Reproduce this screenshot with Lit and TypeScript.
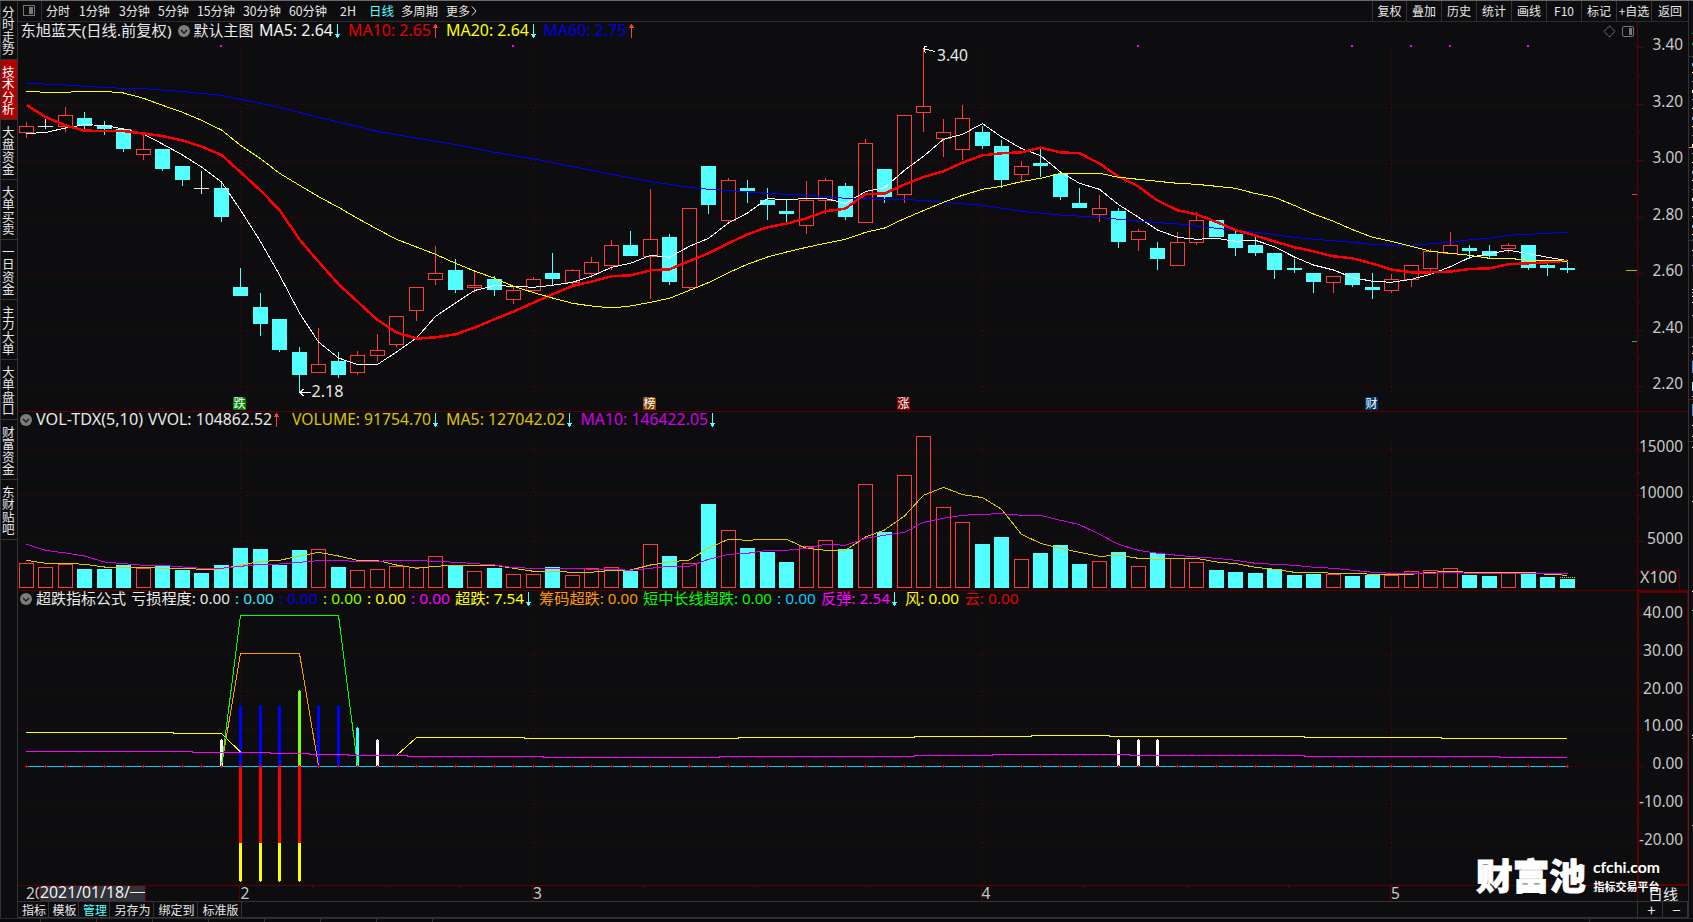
import { LitElement, html, svg, css } from "lit";
import { customElement } from "lit/decorators.js";

const UP = "#ff3c3c";
const DOWN = "#54ffff";
const GRID = "#5f0000";
const N = 80;

/** Left pixel column of the n-th trading day. */
const col = (i: number) => Math.floor(26 + 19.512 * i);

// kind, high, body top, body bottom, low
type Candle = [string, number, number, number, number];
const candles: Candle[] = [
  ["r", 122, 126, 132, 137], ["w", 119, 126, 126, 128], ["r", 107, 115, 126, 131], ["c", 112, 118, 125, 129],
  ["c", 121, 125, 128, 134], ["c", 129, 129, 148, 151], ["r", 135, 149, 154, 159], ["c", 149, 149, 168, 170],
  ["c", 166, 166, 179, 185], ["w", 171, 188, 188, 193], ["c", 183, 188, 216, 221], ["c", 268, 287, 295, 295],
  ["c", 293, 307, 323, 335], ["c", 319, 319, 349, 351], ["c", 347, 352, 374, 392], ["r", 328, 364, 372, 372],
  ["c", 352, 361, 374, 377], ["r", 351, 355, 372, 374], ["r", 334, 350, 355, 360], ["r", 316, 316, 344, 346],
  ["r", 287, 287, 310, 320], ["r", 246, 273, 279, 284], ["c", 259, 270, 289, 292], ["r", 271, 285, 287, 292],
  ["c", 276, 279, 289, 295], ["r", 286, 290, 299, 303], ["r", 277, 279, 290, 290], ["c", 253, 273, 278, 284],
  ["r", 269, 270, 282, 284], ["r", 257, 262, 273, 277], ["r", 240, 245, 265, 269], ["c", 231, 245, 255, 255],
  ["r", 189, 239, 256, 298], ["c", 234, 237, 281, 284], ["r", 208, 208, 287, 289], ["c", 166, 166, 204, 213],
  ["r", 178, 180, 220, 221], ["c", 180, 188, 190, 202], ["c", 188, 200, 204, 219], ["c", 199, 211, 213, 221],
  ["r", 181, 200, 225, 233], ["r", 178, 180, 200, 213], ["c", 183, 186, 216, 219], ["r", 139, 143, 222, 222],
  ["c", 169, 169, 196, 202], ["r", 115, 115, 194, 202], ["r", 48, 106, 112, 131], ["r", 119, 132, 138, 156],
  ["r", 105, 118, 149, 159], ["c", 126, 132, 145, 148], ["c", 140, 146, 179, 187], ["r", 161, 166, 174, 182],
  ["c", 147, 163, 165, 176], ["c", 171, 174, 196, 199], ["c", 188, 203, 207, 207], ["r", 195, 208, 214, 221],
  ["c", 208, 211, 241, 247], ["r", 229, 231, 239, 250], ["c", 242, 248, 258, 269], ["r", 232, 242, 265, 265],
  ["r", 212, 220, 242, 244], ["c", 220, 220, 236, 236], ["c", 230, 234, 247, 255], ["c", 237, 245, 252, 255],
  ["c", 253, 253, 269, 278], ["c", 259, 268, 269, 272], ["c", 273, 273, 281, 292], ["r", 276, 276, 282, 292],
  ["c", 273, 273, 284, 286], ["c", 273, 287, 289, 298], ["r", 274, 279, 290, 292], ["r", 265, 265, 279, 286],
  ["r", 249, 251, 268, 270], ["r", 232, 245, 253, 253], ["c", 245, 248, 250, 258], ["c", 245, 251, 255, 257],
  ["r", 243, 245, 248, 252], ["c", 245, 245, 267, 269], ["c", 264, 265, 267, 275], ["c", 261, 268, 269, 272],
];

const ma5 = [133.5, 132.5, 128, 124.6, 125.5, 129, 134, 144, 155, 167, 182, 210, 241.5, 275, 313, 342, 358, 364.5, 364.5, 352, 338, 316.5, 303, 290.5, 285.6, 286.3, 287.3, 285.3, 282.3, 276.3, 267.3, 263.3, 255.3, 257.3, 246.3, 238.3, 223, 213, 198.6, 199.6, 198.6, 198.6, 203.3, 191.6, 187.8, 170.3, 156.3, 139.3, 134.3, 123.6, 137, 148.6, 155.6, 172, 183.3, 189.3, 204.6, 217.3, 230, 237.3, 239.3, 238.3, 241.3, 240.3, 246.8, 257, 265, 270, 277.6, 281.3, 282.3, 279.3, 274.3, 266.6, 257.6, 253.6, 250.3, 253.6, 257.3, 260.6];
const ma10 = [105, 117, 125.5, 130.6, 131, 131, 133.5, 136, 140.5, 146.5, 155, 172, 190.5, 210, 239.5, 261.6, 284.3, 301.6, 320, 332.3, 338.6, 337.3, 334.3, 327.6, 319.3, 311.6, 302.6, 294.3, 286, 281.6, 276.3, 275.3, 270.3, 269.3, 261, 253.3, 243.3, 234.3, 227.3, 223.6, 218.3, 211.3, 208.6, 194, 193.6, 184.5, 177, 171.3, 162.6, 155.3, 153.3, 152.3, 147.6, 152.3, 153.3, 163.6, 176.6, 186.6, 200.6, 210.3, 214.3, 222, 230, 235.6, 241.5, 247.3, 251.3, 256.3, 258.3, 263.6, 269.6, 272.3, 272.3, 271.6, 269, 268.3, 264.3, 263.3, 262.3, 260.6];
const ma20 = [91.3, 92.3, 92.3, 91.3, 91.3, 93, 98.3, 105.3, 112.3, 120.3, 130, 145.3, 158.6, 173.3, 185.3, 196.6, 207.3, 218.3, 229.3, 239.3, 247, 254.3, 263.3, 271, 278.3, 286.3, 292.6, 298, 303.3, 306, 308, 306, 302.3, 298.3, 290.3, 282.6, 272.6, 264.3, 257, 252, 247.3, 243.3, 239.3, 232.3, 228, 218.6, 210.6, 202.3, 195.3, 189.3, 186.3, 181.6, 178.3, 173.3, 173.3, 173.3, 177.3, 179.3, 181.3, 183.3, 184.3, 186.3, 188.3, 193.6, 197.3, 205.5, 214, 221.3, 229.6, 237.3, 241.3, 246.3, 251.3, 253.3, 255.3, 258.3, 258.3, 260.3, 260.3, 261.3];
const ma60: [number, number][] = [[0, 83.3], [2, 85], [4, 87.5], [5, 88.3], [6, 88.6], [8, 91.6], [10, 95.3], [11, 99.3], [13, 107.3], [15, 117.3], [18, 131.5], [22, 144.6], [24, 152.3], [26, 159], [28, 166.6], [30, 174.3], [32, 181.6], [34, 187.3], [35, 189.3], [38, 193.3], [40, 195.3], [42, 198.3], [44, 199.3], [45, 199.3], [49, 205.3], [51, 211.3], [53, 215], [55, 217.3], [57, 221.3], [59, 224], [61, 228.3], [63, 232.3], [65, 237.3], [66, 239.3], [68, 242.3], [69, 244.3], [70, 245.3], [71, 245.3], [73, 242.3], [74, 239.6], [75, 238.3], [76, 235.3], [77, 234.3], [78, 233.3], [79, 232.3]];

const volTop = [563, 567, 564, 569, 569, 565, 568, 566, 570, 573, 565, 548, 549, 565, 550, 549, 567, 570, 569, 566, 567, 556, 565, 571, 568, 574, 574, 567, 575, 568, 567, 571, 544, 556, 563, 504, 530, 548, 552, 562, 546, 540, 549, 484, 532, 475, 436, 507, 522, 544, 537, 559, 553, 545, 564, 561, 552, 566, 553, 558, 562, 570, 572, 573, 569, 575, 574, 574, 576, 575, 575, 571, 570, 568, 575, 576, 573, 572, 577, 579];
const vma5 = [560.3, 563.3, 563.3, 564.3, 567, 567, 567, 568.3, 568.3, 569.3, 569, 565, 561.6, 560.3, 556, 552.3, 556, 560.3, 560.6, 565, 568.3, 566.3, 565.3, 565.3, 565.3, 568.3, 571.3, 571.3, 572.3, 572.3, 570.3, 570, 565, 562, 560, 548, 539.3, 540.3, 539.3, 539.3, 548.3, 550.3, 550.3, 537, 530, 516, 495.3, 487.3, 494.6, 497.6, 509.3, 534.3, 543.3, 548.3, 552.3, 556.4, 555.3, 558.3, 559.3, 558.3, 558.3, 562, 563.6, 567.3, 569.3, 572.3, 572.3, 573.3, 573.3, 574.3, 574.3, 574.3, 572.3, 571.5, 572.3, 572.3, 572.3, 572.5, 574.3, 575.3];
const vma10 = [544.3, 550.3, 553, 556, 562, 563.6, 565.3, 565.3, 567, 568.3, 568.3, 566.3, 564.3, 564, 562.3, 560.6, 560.6, 561.3, 561.3, 560.3, 560.6, 561.3, 562.3, 563.6, 565, 567.6, 568.3, 568.3, 568.3, 569.3, 569.3, 570.3, 568.3, 566.3, 566.3, 559.3, 554.3, 553.3, 550.3, 550.3, 548.3, 544.3, 545.3, 538.3, 535.3, 532.3, 522.3, 518.3, 515.3, 514.3, 513.6, 515.3, 515.3, 520.3, 524.6, 534.3, 544.3, 550.3, 553.3, 555.3, 557, 558.3, 560.3, 563.3, 564.3, 565.3, 567.3, 568.3, 570.3, 572.3, 573.3, 573.3, 573.3, 572.3, 573.3, 573.3, 573.3, 573.3, 573.3, 573.3];

const series = (v: number[]) => v.map((y, i) => `${col(i) + 0.5},${y}`).join(" ");

/** Expands [x, y] level changes into a stepped polyline that ends at `end`. */
const steps = (levels: [number, number][], end: number) =>
  levels.map(([x, y], i) => `${x},${y} ${i + 1 < levels.length ? levels[i + 1][0] : end},${y}`).join(" ");

const line = (points: string, color: string, w = 1) =>
  svg`<polyline points=${points} fill="none" stroke=${color} stroke-width=${w}></polyline>`;

const rect = (x: number, y: number, w: number, h: number, fill: string) =>
  svg`<rect x=${x} y=${y} width=${w} height=${h} fill=${fill}></rect>`;

const label = (x: number, y: number, w: number, color: string, text: string) =>
  svg`<text x=${x} y=${y} textLength=${w} lengthAdjust="spacingAndGlyphs" fill=${color}>${text}</text>`;

/** Trend arrow whose shaft is centred on column x, starting at y. */
const trend = (x: number, y: number, up: boolean) => {
  const c = up ? UP : DOWN;
  return up
    ? svg`${rect(x, y, 1, 14, c)}${rect(x - 1, y + 1, 3, 3, c)}${rect(x - 2, y + 3, 5, 1, c)}`
    : svg`${rect(x, y, 1, 14, c)}${rect(x - 1, y + 10, 3, 3, c)}${rect(x - 2, y + 10, 5, 1, c)}`;
};

const toggle = (x: number, y: number) => svg`
  <circle cx=${x} cy=${y} r="6" fill="#7c7c7c" shape-rendering="auto"></circle>
  <path d="M${x - 3} ${y - 1}l3 3 3-3" fill="none" stroke="#1c1c1c" stroke-width="1.4" shape-rendering="auto"></path>`;

const hGrid = (y: number) =>
  svg`<line x1="19" x2="1637" y1=${y + 0.5} y2=${y + 0.5} stroke=${GRID} stroke-dasharray="1 3"></line>`;
const vGrid = (x: number, a: number, b: number) =>
  svg`<line x1=${x + 0.5} x2=${x + 0.5} y1=${a} y2=${b} stroke=${GRID} stroke-dasharray="1 3"></line>`;

const badge = (x: number, fill: string, text: string) => svg`
  <path d="M${x} 397h11l2 2v11h-13z" fill=${fill}></path>
  <text x=${x + 0.5} y="408" font-size="12" fill="#fff">${text}</text>`;

const months = [240, 533, 982, 1391];
const priceTicks: [number, string][] = [[47, "3.40"], [104, "3.20"], [160, "3.00"], [217, "2.80"], [273, "2.60"], [330, "2.40"], [386, "2.20"]];
const volTicks: [number, string][] = [[449, "15000"], [495, "10000"], [541, "5000"]];
const indTicks: [number, string][] = [[615, "40.00"], [653, "30.00"], [691, "20.00"], [728, "10.00"], [766, "0.00"], [804, "-10.00"], [842, "-20.00"]];
const tickWidth: Record<number, number> = { 4: 30.5, 5: 40, 6: 44 };

@customElement("stock-chart")
export class StockChart extends LitElement {
  static styles = css`
    :host { display: block; }
    svg { display: block; overflow: visible; }
    text { font: 15.5px "Noto Sans", "Noto Sans CJK SC", sans-serif; }
    text[font-size="12"] { font-size: 12px; }
    .cn text, text.cn { font-size: 15px; }
    .axis { fill: #c9c9c9; }
    .mark-big { font: 900 36px "Noto Sans CJK SC", sans-serif; stroke: #fff; stroke-width: 0.8px; }
    .mark-url { font: 700 15.5px "Lato", "Noto Sans", sans-serif; }
    .mark-sub { font: 700 11px "Noto Sans CJK SC", sans-serif; }
  `;

  private grid() {
    return svg`
      ${[104, 160, 217, 273, 330, 386, 449, 495, 541, 653, 691, 728, 766, 804, 842].map(hGrid)}
      ${months.map((x) => svg`${vGrid(x, 47, 397)}${vGrid(x, 436, 588)}${vGrid(x, 615, 885)}`)}
      ${rect(18, 411, 1670, 1, GRID)}
      ${rect(18, 590, 1670, 1, GRID)}
      ${rect(18, 885, 1620, 1, GRID)}
      ${rect(1637, 22, 1, 879, GRID)}`;
  }

  private axis() {
    const major = [...priceTicks, ...volTicks, ...indTicks];
    return svg`
      <rect x="1638" y="592" width="50" height="293" fill="none" stroke=${GRID} stroke-width="2"></rect>
      <rect x="1637.5" y="570.5" width="42" height="20" fill="none" stroke=${GRID}></rect>
      ${major.map(([y]) => rect(1638, y, 5, 1, GRID))}
      ${[76, 132, 189, 245, 302, 358, 472, 518, 634, 672, 710, 747, 785, 823].map((y) => rect(1638, y, 2, 1, GRID))}
      <g class="axis">
        ${major.map(([y, t]) => {
          const w = t === "5000" ? 36 : t === "15000" || t === "10000" ? 44 : tickWidth[t.length];
          return svg`<text x=${1683 - w} y=${y + 3} textLength=${w} lengthAdjust="spacingAndGlyphs">${t}</text>`;
        })}
        <text x="1640" y="583" textLength="37" lengthAdjust="spacingAndGlyphs">X100</text>
      </g>
      ${rect(1632, 194, 5, 1, "#ff3232")}
      ${rect(1626, 270, 11, 1, "#b4b400")}
      ${rect(1632, 341, 5, 1, "#00c83c")}`;
  }

  private candles() {
    return candles.map(([k, hi, top, bot, lo], i) => {
      const x = col(i);
      if (k === "w") return svg`${rect(x, hi, 1, lo - hi + 1, "#e6e6e6")}${rect(x - 7, top, 15, 1, "#e6e6e6")}`;
      if (k === "c") return svg`${rect(x, hi, 1, lo - hi + 1, DOWN)}${rect(x - 7, top, 15, bot - top + 1, DOWN)}`;
      return svg`
        ${hi < top ? rect(x, hi, 1, top - hi, UP) : ""}
        ${lo > bot ? rect(x, bot, 1, lo - bot + 1, UP) : ""}
        <rect x=${x - 6.5} y=${top + 0.5} width="14" height=${bot - top} fill="none" stroke=${UP}></rect>`;
    });
  }

  private pricePane() {
    return svg`
      ${this.candles()}
      ${line(series(ma5), "#ffffff")}
      ${line(ma60.map(([i, y]) => `${col(i) + 0.5},${y}`).join(" "), "#0000ff")}
      ${line(series(ma10), "#ff0000", 2.5)}
      ${line(series(ma20), "#ffff00")}
      ${[220, 512, 1137, 1351, 1410, 1449, 1527].map((x) => rect(x, 45, 2, 2, "#ff00ff"))}
      <path d="M300 392.5h11M303.5 389l-3.5 3.5 3.5 3.5" fill="none" stroke="#fff"></path>
      ${label(311.5, 397, 32, "#e8e8e8", "2.18")}
      <path d="M923.5 48.5l11.5 3M927 46.5h-3v5l2 1" fill="none" stroke="#fff"></path>
      ${label(937, 61, 31, "#e8e8e8", "3.40")}
      ${badge(233, "#008000", "跌")}${badge(643, "#804000", "榜")}${badge(897, "#800000", "涨")}${badge(1365, "#003a70", "财")}
      <g class="cn">
        ${label(20.5, 36, 151, "#e8e8e8", "东旭蓝天(日线.前复权)")}
        ${label(193.5, 36, 60, "#e8e8e8", "默认主图")}
      </g>
      ${toggle(184, 31)}
      ${label(259, 36, 74, "#f4f4f4", "MA5: 2.64")}${trend(337, 24, false)}
      ${label(348, 36, 83, "#e60000", "MA10: 2.65")}${trend(435, 24, true)}
      ${label(446, 36, 83, "#ffff00", "MA20: 2.64")}${trend(533, 24, false)}
      ${label(543.5, 36, 83, "#0000e6", "MA60: 2.75")}${trend(631, 24, true)}
      <path d="M1609.5 26l5.5 5.500-5.500 5.500-5.500-5.500z" fill="none" stroke="#999" stroke-dasharray="1.4 .6" shape-rendering="auto"></path>
      <rect x="1622.5" y="26.5" width="11" height="10" rx="1.5" fill="none" stroke="#777" shape-rendering="auto"></rect>
      ${rect(1629, 28, 3, 7, "#777")}`;
  }

  private volumePane() {
    return svg`
      ${volTop.map((y, i) => {
        const x = col(i);
        const k = candles[i][0];
        return k === "c" || i === 9
          ? rect(x - 7, y, 15, 588 - y, DOWN)
          : svg`<rect x=${x - 6.5} y=${y + 0.5} width="14" height=${587 - y} fill="none" stroke=${UP}></rect>`;
      })}
      ${line(series(vma5), "#e0c800")}
      ${line(series(vma10), "#d200e6")}
      <line x1="1560" x2="1576" y1="577.5" y2="577.5" stroke="#e0c800" stroke-dasharray="1 1"></line>
      ${toggle(26, 420)}
      ${label(36, 425, 107, "#e8e8e8", "VOL-TDX(5,10)")}
      ${label(148, 425, 124, "#e8e8e8", "VVOL: 104862.52")}${trend(276, 413, true)}
      ${label(292, 425, 139, "#dcc400", "VOLUME: 91754.70")}${trend(435, 413, false)}
      ${label(446, 425, 119, "#dcc400", "MA5: 127042.02")}${trend(569, 413, false)}
      ${label(580.5, 425, 127.5, "#d200e6", "MA10: 146422.05")}${trend(712, 413, false)}`;
  }

  private stick(i: number, top: number, color: string) {
    const x = col(i);
    return svg`${rect(x, top, 1, 1, color)}${rect(x - 1, top + 1, 3, 765 - top, color)}`;
  }

  private indicatorPane() {
    const c = (i: number) => col(i) + 0.5;
    const yellow: [number, number][] = [[416.5, 737.5], [524, 738.5], [738, 737.5], [914, 736.5], [1031, 735.5], [1109, 736.5], [1304, 737.5], [1441, 738.5]];
    const magenta: [number, number][] = [[26, 751.5], [192, 752.5], [270, 753.5], [309, 754.5], [348, 755.5], [407, 756.5], [543, 757.5], [719, 756.5], [914, 755.5], [992, 754.5], [1129, 755.5], [1304, 756.5], [1499, 757.5]];
    return svg`
      ${[10, 18, 56, 57, 58].map((i) => this.stick(i, 739, "#ffffff"))}
      ${[11, 12, 13, 15, 16].map((i) => this.stick(i, 705, "#0000ff"))}
      ${this.stick(14, 690, "#80ff00")}
      ${this.stick(17, 727, "#33ffff")}
      ${line(`26,732.5 173,732.5 173,733.5 ${c(10)},733.5 ${c(11)},752`, "#ffff00")}
      ${line(`${c(19)},755.5 ${steps(yellow, 1567)}`, "#ffff00")}
      ${line(`${c(10)},766 ${c(11)},653.5 ${c(14)},653.5 ${c(15)},766`, "#ff9900")}
      ${line(`${c(10)},766 ${c(11)},615.5 ${c(16)},615.5 ${c(17)},766`, "#00ff00")}
      ${rect(26, 766, 1541, 1, "#00ccff")}
      ${line(steps(magenta, 1567), "#ff00ff")}
      ${Array.from({ length: N }, (_, i) => svg`${rect(col(i) - 1, 766, 3, 1, "#ff0000")}${rect(col(i), 765, 1, 3, "#ff0000")}`)}
      ${[11, 12, 13, 14].map((i) => svg`${rect(col(i) - 1, 766, 3, 77, "#ff0000")}${rect(col(i) - 1, 843, 3, 38, "#ffff00")}${rect(col(i), 881, 1, 1, "#ffff00")}`)}
      ${toggle(26, 599)}
      <g class="cn">
        ${label(36, 604, 90, "#e8e8e8", "超跌指标公式")}
        ${label(131, 604, 99, "#e8e8e8", "亏损程度: 0.00")}
        ${label(235, 604, 39, "#33e6ff", ": 0.00")}
        ${label(279, 604, 39, "#0000e6", ": 0.00")}
        ${label(323, 604, 39, "#80ff00", ": 0.00")}
        ${label(367, 604, 39, "#ffff00", ": 0.00")}
        ${label(411, 604, 39, "#ff00ff", ": 0.00")}
        ${label(455, 604, 69, "#ffff00", "超跌: 7.54")}${trend(528, 592, false)}
        ${label(539, 604, 99, "#ff9900", "筹码超跌: 0.00")}
        ${label(643, 604, 129, "#00ff00", "短中长线超跌: 0.00")}
        ${label(777, 604, 39, "#00ccff", ": 0.00")}
        ${label(821, 604, 69, "#ff00ff", "反弹: 2.54")}${trend(894, 592, false)}
        ${label(905, 604, 54, "#ffff00", "风: 0.00")}
        ${label(964.5, 604, 54, "#e60000", "云: 0.00")}
      </g>`;
  }

  private timeAxis() {
    return svg`
      ${[312, 386, 459, 644, 757, 869, 1083, 1187, 1288].map((x) => rect(x, 886, 1, 2, GRID))}
      ${months.map((x) => rect(x - 1, 885, 1, 16, GRID))}
      <g class="axis">
        <text x="26" y="898.5">20</text>
        <text x="240.5" y="898.5">2</text><text x="533" y="898.5">3</text>
        <text x="981.5" y="898.5">4</text><text x="1391" y="898.5">5</text>
      </g>
      ${rect(39, 886, 107, 15, "#32323a")}
      ${rect(39, 886, 1, 15, GRID)}${rect(145, 886, 1, 15, GRID)}
      ${label(40, 898, 90, "#f0f0f0", "2021/01/18/")}
      ${rect(130, 892, 15, 1, "#f0f0f0")}
      <text class="cn" x="1648" y="900" textLength="30" fill="#e8e8e8">日线</text>`;
  }

  private watermark() {
    return svg`<g fill="#fff">
      <text class="mark-big" x="1476" y="890" textLength="110" lengthAdjust="spacingAndGlyphs">财富池</text>
      <text class="mark-url" x="1593" y="873" textLength="67" lengthAdjust="spacingAndGlyphs">cfchi.com</text>
      <text class="mark-sub" x="1593.5" y="891" textLength="66" lengthAdjust="spacingAndGlyphs">指标交易平台</text>
    </g>`;
  }

  render() {
    return html`<svg width="1670" height="879" viewBox="18 22 1670 879" shape-rendering="crispEdges">
      ${this.grid()}${this.axis()}${this.pricePane()}${this.volumePane()}${this.indicatorPane()}${this.timeAxis()}${this.watermark()}
    </svg>`;
  }
}

@customElement("app-root")
export class AppRoot extends LitElement {
  static styles = css`
    :host {
      display: grid;
      grid-template-columns: 17px 1671px 5px;
      grid-template-rows: 917px 5px;
      box-sizing: border-box;
      width: 1693px;
      height: 922px;
      overflow: hidden;
      background: #0d0d0f;
      color: #e6e6e6;
      border-top: 1px solid #6a6a6a;
      font: 12px/14px "Noto Sans CJK SC", sans-serif;
    }
    .side { display: flex; flex-direction: column; border-left: 1px solid #333335; }
    .side div {
      height: 60px; box-sizing: border-box; border-bottom: 1px solid #333335;
      padding: 6px 1px 0 1px; line-height: 12.4px; width: 16px; word-break: break-all; font-size: 12.5px;
    }
    .side div:first-child { height: 59px; padding-top: 5px; }
    .side .on { background: #b00000; color: #fff; }
    .main { display: grid; grid-template-rows: 21px 879px 17px; border-left: 1px solid #333335; }
    .top { display: flex; align-items: center; box-sizing: border-box; border-bottom: 1px solid #2c2c2e; white-space: nowrap; }
    .layout { width: 24px; height: 20px; border-right: 1px solid #333335; display: flex; align-items: center; justify-content: center; box-sizing: border-box; }
    .periods { display: flex; flex: 1; padding-left: 4px; }
    .cyan { color: #54ffff; }
    .tools { display: flex; height: 20px; }
    .tools span { box-sizing: border-box; width: 35px; border-left: 1px solid #333335; text-align: center; line-height: 19px; }
    .tools span:first-child { width: 34px; }
    .tools span:last-child { width: 37px; }
    .tabs { display: flex; box-sizing: border-box; border-top: 1px solid #333335; border-bottom: 1px solid #333335; line-height: 15px; }
    .tabs span { box-sizing: border-box; border-right: 1px solid #333335; padding-left: 2px; text-align: center; white-space: nowrap; }
    .tabs .fill { flex: 1; }
    .tabs .step { font-size: 15px; width: 25px; padding-left: 3px; }
    .rail { border-left: 1px solid #333335; }
    .rail svg, .foot svg { display: block; }
    .foot { grid-column: 1 / 4; background: #0a0a0c; }
    .period text { font-size: 12.5px; }
  `;

  private side = ["分时走势", "技术分析", "大盘资金", "大单买卖", "一日资金", "主力大单", "大单盘口", "财富资金", "东财贴吧"];
  // label, left gap, text width
  private periods: [string, number, number][] = [["分时", 0, 24], ["1分钟", 9, 31], ["3分钟", 9, 31], ["5分钟", 8, 31], ["15分钟", 8, 38], ["30分钟", 8, 38], ["60分钟", 8, 38], ["2H", 13, 16], ["日线", 13, 25], ["多周期", 7, 37], ["更多", 8, 24]];
  private tools = ["复权", "叠加", "历史", "统计", "画线", "F10", "标记", "+自选", "返回"];
  private tabs: [string, number][] = [["指标", 31], ["模板", 30], ["管理", 31], ["另存为", 44], ["绑定到", 44], ["标准版", 44]];

  private rail() {
    return html`<svg width="4" height="900" viewBox="0 1 4 900" shape-rendering="crispEdges">
      ${[56, 240, 337, 399, 441].map((y) => rect(0, y, 4, 1, "#333335"))}
      ${[33, 43, 44].map((y) => rect(3, y, 1, 1, "#00a030"))}
      ${Array.from({ length: 20 }, (_, i) => rect(3, 63 + i * 9, 1, i % 3 ? 1 : 3, i % 2 ? "#ffffff" : "#6fa8e8"))}
      ${rect(0, 147, 4, 1, "#e09a20")}
      ${[265, 292, 315, 396, 610, 738, 825].map((y) => rect(3, y, 1, 1, "#9ac8ff"))}
      ${[250, 289, 296, 302, 346, 353, 425, 436, 447, 501, 591, 735].map((y) => rect(3, y, 1, 1, "#e8e8e8"))}
      ${rect(3, 361, 1, 12, "#5090d8")}${rect(3, 382, 1, 9, "#a8e8ff")}${rect(3, 404, 1, 12, "#5090d8")}
    </svg>`;
  }

  render() {
    return html`
      <nav class="side">${this.side.map((t, i) => html`<div class=${i === 1 ? "on" : ""}>${t}</div>`)}</nav>
      <section class="main">
        <header class="top">
          <div class="layout">
            <svg width="13" height="12" viewBox="0 0 13 12" shape-rendering="crispEdges">
              <rect x="0.5" y="0.5" width="11" height="10" rx="1" fill="none" stroke="#777"></rect>
              <rect x="6" y="2" width="4" height="7" fill="#777"></rect>
            </svg>
          </div>
          <div class="periods">
            ${this.periods.map(([t, gap, w]) => html`<svg class="period" width=${w + gap} height="16">
              <text x=${gap} y="12.5" textLength=${w} lengthAdjust="spacingAndGlyphs" fill=${t === "日线" ? "#54ffff" : "#e6e6e6"}>${t}</text>
            </svg>`)}
            <svg width="8" height="16" viewBox="0 0 8 16"><path d="M2 3.5l4 4.500-4 4.500" fill="none" stroke="#e6e6e6"></path></svg>
          </div>
          <div class="tools">${this.tools.map((t) => html`<span>${t}</span>`)}</div>
        </header>
        <stock-chart></stock-chart>
        <footer class="tabs">
          ${this.tabs.map(([t, w]) => html`<span class=${t === "管理" ? "cyan" : ""} style="width:${w}px">${t}</span>`)}
          <span class="fill"></span>
          <span class="step">+</span><span class="step">−</span>
        </footer>
      </section>
      <aside class="rail">${this.rail()}</aside>
      <div class="foot"><svg width="1693" height="5" shape-rendering="crispEdges">
        ${rect(0, 0, 1693, 1, "#2a2a2c")}
        ${[40, 96, 152, 208, 264, 320, 376, 432, 1589].map((x) => rect(x, 1, 1, 4, "#333335"))}
      </svg></div>`;
  }
}
